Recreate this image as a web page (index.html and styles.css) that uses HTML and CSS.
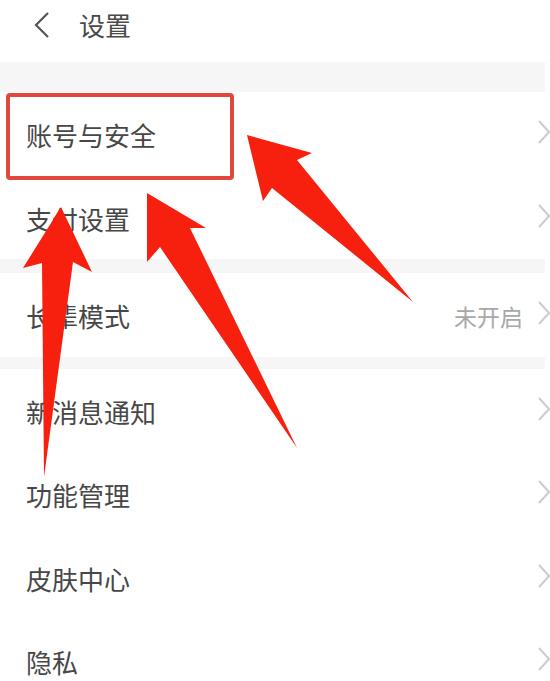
FILE: index.html
```html
<!DOCTYPE html>
<html lang="zh-CN">
<head>
<meta charset="utf-8">
<title>设置</title>
<link rel="stylesheet" href="styles.css">
</head>
<body>
<div class="page">
  <header class="topbar">
    <svg class="back" width="22" height="28" viewBox="0 0 22 28"><polyline points="17,2 5,14 17,26" fill="none" stroke="#555" stroke-width="2.2" stroke-linejoin="miter"/></svg>
    <span class="title">设置</span>
  </header>
  <div class="band band-top"></div>
  <div class="row highlight"><span class="label">账号与安全</span><svg class="chev" width="14" height="26" viewBox="0 0 14 26"><polyline points="2,2 12,13 2,24" fill="none" stroke="#cccccc" stroke-width="2"/></svg></div>
  <div class="row"><span class="label">支付设置</span><svg class="chev" width="14" height="26" viewBox="0 0 14 26"><polyline points="2,2 12,13 2,24" fill="none" stroke="#cccccc" stroke-width="2"/></svg></div>
  <div class="band"></div>
  <div class="row"><span class="label">长辈模式</span><span class="right"><span class="value">未开启</span><svg class="chev" width="14" height="26" viewBox="0 0 14 26"><polyline points="2,2 12,13 2,24" fill="none" stroke="#cccccc" stroke-width="2"/></svg></span></div>
  <div class="band band-thin"></div>
  <div class="row"><span class="label">新消息通知</span><svg class="chev" width="14" height="26" viewBox="0 0 14 26"><polyline points="2,2 12,13 2,24" fill="none" stroke="#cccccc" stroke-width="2"/></svg></div>
  <div class="row"><span class="label">功能管理</span><svg class="chev" width="14" height="26" viewBox="0 0 14 26"><polyline points="2,2 12,13 2,24" fill="none" stroke="#cccccc" stroke-width="2"/></svg></div>
  <div class="row"><span class="label">皮肤中心</span><svg class="chev" width="14" height="26" viewBox="0 0 14 26"><polyline points="2,2 12,13 2,24" fill="none" stroke="#cccccc" stroke-width="2"/></svg></div>
  <div class="row"><span class="label">隐私</span><svg class="chev" width="14" height="26" viewBox="0 0 14 26"><polyline points="2,2 12,13 2,24" fill="none" stroke="#cccccc" stroke-width="2"/></svg></div>

  <svg class="arrows" width="550" height="681" viewBox="0 0 550 681">
    <polygon points="247,135 312,153 297,160 413,302 272,188 263,201" fill="#f7200e"/>
    <polygon points="147,193 206,228 190,228 297,448 160,247 147,262" fill="#f7200e"/>
    <polygon points="61,207 92,272 73,262 44,477 42,263 23,268" fill="#f7200e"/>
  </svg>
</div>
</body>
</html>
```
FILE: styles.css
```css
html, body {
  margin: 0;
  padding: 0;
  background: #ffffff;
  overflow: hidden;
}
.page {
  position: relative;
  width: 550px;
  height: 681px;
  overflow: hidden;
  font-family: "Noto Sans CJK SC", "Noto Sans", sans-serif;
  color: #474747;
}
.topbar {
  height: 62px;
  display: flex;
  align-items: center;
  padding-left: 31px;
  gap: 26px;
}
.back {
  display: block;
  margin-top: -12px;
}
.title {
  font-size: 26px;
  line-height: 1;
  margin-top: -13px;
  color: #4a4a4a;
}
.band {
  height: 14px;
  background: #f6f6f6;
  margin-right: 5px;
}
.band-top {
  height: 30px;
}
.band-thin {
  height: 12px;
}
.row {
  height: 83.5px;
  display: flex;
  align-items: center;
  justify-content: space-between;
  padding-left: 26px;
  box-sizing: border-box;
  padding-top: 3px;
}
.label {
  font-size: 26px;
  line-height: 1;
  color: #474747;
}
.right {
  display: flex;
  align-items: center;
  gap: 14px;
}
.value {
  font-size: 23px;
  line-height: 1;
  color: #a8a8a8;
}
.chev {
  display: block;
  margin-right: -1px;
  margin-top: -6px;
}
.highlight {
  position: relative;
}
.highlight::before {
  content: "";
  position: absolute;
  left: 6px;
  top: 1px;
  width: 228px;
  height: 87px;
  box-sizing: border-box;
  border: 4px solid #e2473b;
  border-radius: 4px;
}
.arrows {
  position: absolute;
  left: 0;
  top: 0;
  pointer-events: none;
}
```
